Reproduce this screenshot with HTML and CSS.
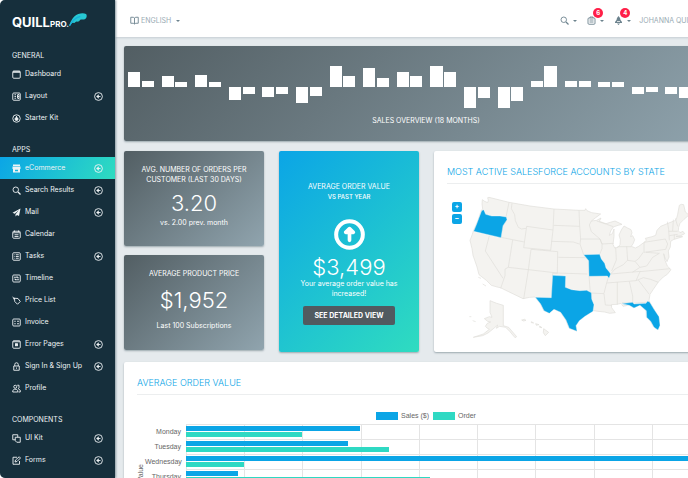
FILE: index.html
```html
<!DOCTYPE html>
<html lang="en">
<head>
<meta charset="utf-8">
<title>QuillPro eCommerce dashboard</title>
<link rel="stylesheet" href="styles.css">
</head>
<body>
<svg class="sprite" aria-hidden="true">
  <symbol id="i-window" viewBox="0 0 18 18"><rect x="1.5" y="2" width="15" height="14.500" rx="2"/><path d="M2 4h14" stroke-width="3"/></symbol>
  <symbol id="i-layout" viewBox="0 0 18 18"><rect x="1.500" y="2" width="15" height="14.500" rx="2"/><path d="M5 5.500h3M5 9h3M5 12.500h3M11 5v8M11 9h3M12 5h2v8h-2"/></symbol>
  <symbol id="i-kit" viewBox="0 0 18 18"><circle cx="9" cy="9" r="7.500"/><circle cx="9" cy="10" r="3" fill="currentColor"/><path d="M9 4v4"/></symbol>
  <symbol id="i-shop" viewBox="0 0 18 18"><path fill="currentColor" stroke="none" d="M2 1h14v3H2zM1 5h16v5H1zM2 10h14v7H2z"/><path d="M6 13h6" stroke="#16b4da" stroke-width="3"/></symbol>
  <symbol id="i-search" viewBox="0 0 18 18"><circle cx="7.500" cy="7.500" r="5.500"/><path d="M12 12l5 5" stroke-width="2.500"/></symbol>
  <symbol id="i-mail" viewBox="0 0 18 18"><path fill="currentColor" stroke="none" d="M17 1L1 9.500l4.500 2L14 4l-7 8.500V17l3-3 4 2z"/></symbol>
  <symbol id="i-calendar" viewBox="0 0 18 18"><rect x="1.500" y="2.500" width="15" height="14" rx="2"/><path d="M2 5.500h14M5 1v3M13 1v3M5 9.500h8M5 13h8"/></symbol>
  <symbol id="i-tasks" viewBox="0 0 18 18"><rect x="1.500" y="1.500" width="15" height="15" rx="2"/><path d="M4.500 5.500h1M7.500 5.500h6M4.500 9h1M7.500 9h6M4.500 12.500h1M7.500 12.500h6"/></symbol>
  <symbol id="i-timeline" viewBox="0 0 18 18"><rect x="1.500" y="2" width="15" height="14" rx="2"/><path d="M4 6.500h8V9M10 5l2 2M14 11.500H6V9M8 10l-2 2"/></symbol>
  <symbol id="i-tag" viewBox="0 0 18 18"><path d="M5 4.500l7 .5 4.500 6-5.500 5.500L5.500 11zM6 6L1 2M2 6l4-2"/></symbol>
  <symbol id="i-invoice" viewBox="0 0 18 18"><rect x="1.500" y="2" width="15" height="14" rx="2"/><path d="M4.500 6.500h3M10 6.500h4M4.500 11.500h3M10 11.500h4"/></symbol>
  <symbol id="i-error" viewBox="0 0 18 18"><rect x="1.500" y="1.500" width="15" height="15" rx="2"/><path d="M2 3.500h14"/><rect x="7" y="7.500" width="4" height="4" fill="currentColor"/></symbol>
  <symbol id="i-lock" viewBox="0 0 18 18"><path d="M5.500 8V5a3.500 3.500 0 0 1 7 0v3M3.500 8h11v8.500h-11zM9 11v2.500"/></symbol>
  <symbol id="i-users" viewBox="0 0 18 18"><circle cx="6.500" cy="5.500" r="3"/><path d="M1.500 16v-3l3-2.500h4l3 2.500v3zM10.500 2.500h3.500v5l-1.500 2 4 3V16H13"/></symbol>
  <symbol id="i-copy" viewBox="0 0 18 18"><path d="M6.500 11.500h-5v-10h10v5"/><path d="M6.500 6.500h10v10h-7l-3-3z"/></symbol>
  <symbol id="i-edit" viewBox="0 0 18 18"><path d="M10 2.500H2v14h13V10"/><path d="M6 12l1-4 7.500-6.500 2.500 2.500L10 11z"/></symbol>
  <symbol id="i-table" viewBox="0 0 18 18"><rect x="1.500" y="1.500" width="15" height="15" rx="2"/><path d="M2 3h14M2 9h14M9 3v13"/></symbol>
  <symbol id="i-more" viewBox="0 0 18 18"><circle cx="9" cy="9" r="7.800"/><path d="M13 9H6"/><path d="M9 5.500L5 9l4 3.500z" fill="currentColor" stroke-width="1"/></symbol>
  <symbol id="i-book" viewBox="0 0 18 18"><path d="M1.500 2.500h5L9 4l2.500-1.500h5v12h-5L9 16l-2.500-1.500h-5zM9 4v12"/></symbol>
  <symbol id="i-clip" viewBox="0 0 18 18"><rect x="2" y="4" width="14" height="12.500" rx="2"/><path d="M6 4V2h6v2M5 8h8M5 12h8"/></symbol>
  <symbol id="i-bell" viewBox="0 0 18 18"><path fill="currentColor" stroke="none" d="M9 0l3 4 1 4 3 4v2H2v-2l3-4 1-4zM6 15h6l-3 3z"/><path d="M6 11h6" stroke="#fff" stroke-width="1.500"/></symbol>
</svg>
<div class="shell">
  <aside class="sidebar">
    <a class="logo" href="#">QUILL<small>PRO.</small><svg viewBox="0 0 54 42" aria-hidden="true"><path d="M0 40C6 22 14 8 28 3c8-3 18-3 23 0 4 4 2 13-4 16-5 2-8-1-13 1-3 3-4 6-10 6-4-1-4 3-8 4l-5-1C6 32 4 37 0 40z" fill="#27c8d3"/><path d="M2 38C8 26 18 14 34 10" fill="none" stroke="#18afdc" stroke-width="4"/></svg></a>
    <nav>
      <h2>GENERAL</h2>
      <a href="#"><svg><use href="#i-window"/></svg>Dashboard</a>
      <a href="#"><svg><use href="#i-layout"/></svg>Layout<svg class="more"><use href="#i-more"/></svg></a>
      <a href="#"><svg><use href="#i-kit"/></svg>Starter Kit</a>
      <h2>APPS</h2>
      <a href="#" class="active"><svg><use href="#i-shop"/></svg>eCommerce<svg class="more"><use href="#i-more"/></svg></a>
      <a href="#"><svg><use href="#i-search"/></svg>Search Results<svg class="more"><use href="#i-more"/></svg></a>
      <a href="#"><svg><use href="#i-mail"/></svg>Mail<svg class="more"><use href="#i-more"/></svg></a>
      <a href="#"><svg><use href="#i-calendar"/></svg>Calendar</a>
      <a href="#"><svg><use href="#i-tasks"/></svg>Tasks<svg class="more"><use href="#i-more"/></svg></a>
      <a href="#"><svg><use href="#i-timeline"/></svg>Timeline</a>
      <a href="#"><svg><use href="#i-tag"/></svg>Price List</a>
      <a href="#"><svg><use href="#i-invoice"/></svg>Invoice</a>
      <a href="#"><svg><use href="#i-error"/></svg>Error Pages<svg class="more"><use href="#i-more"/></svg></a>
      <a href="#"><svg><use href="#i-lock"/></svg>Sign In &amp; Sign Up<svg class="more"><use href="#i-more"/></svg></a>
      <a href="#"><svg><use href="#i-users"/></svg>Profile</a>
      <h2>COMPONENTS</h2>
      <a href="#"><svg><use href="#i-copy"/></svg>UI Kit<svg class="more"><use href="#i-more"/></svg></a>
      <a href="#"><svg><use href="#i-edit"/></svg>Forms<svg class="more"><use href="#i-more"/></svg></a>
      <a href="#"><svg><use href="#i-table"/></svg>Tables</a>
    </nav>
  </aside>
  <div class="main">
    <header class="topbar">
      <button class="lang"><svg><use href="#i-book"/></svg>ENGLISH<i class="caret"></i></button>
      <div class="tools">
        <button aria-label="Search"><svg><use href="#i-search"/></svg><i class="caret"></i></button>
        <button aria-label="Tasks"><svg><use href="#i-clip"/></svg><i class="caret"></i><b class="badge">6</b></button>
        <button aria-label="Alerts"><svg><use href="#i-bell"/></svg><i class="caret"></i><b class="badge">4</b></button>
        <button class="user">JOHANNA QUINN</button>
      </div>
    </header>
    <main class="dashboard">
      <section class="card slate overview">
        <svg viewBox="0 0 604 44" preserveAspectRatio="none" fill="#fff" shape-rendering="crispEdges" aria-hidden="true">
          <path d="M4 22v-15h12v15zM18 22v-6h12v6zM38 22v-11h12v11zM51 22v-5h12v5zM71 22v-12h12v12zM85 22v-5h12v5zM105 22v13h12v-13zM119 22v7h12v-7zM138 22v10h12v-10zM152 22v7h12v-7zM172 22v16h12v-16zM186 22v9h12v-9zM206 22v-21h12v21zM219 22v-11h12v11zM239 22v-19h12v19zM253 22v-9h12v9zM273 22v-15h12v15zM286 22v-11h12v11zM306 22v-21h13v21zM320 22v-15h12v15zM340 22v21h12v-21zM354 22v11h12v-11zM374 22v21h12v-21zM387 22v14h12v-14zM407 22v-6h12v6zM420 22v-21h13v21zM441 22v-6h12v6zM455 22v-6h12v6zM474 22v-5h12v5zM488 22v-5h12v5zM508 22v7h12v-7zM522 22v5h12v-5zM541 22v7h12v-7zM555 22v11h12v-11zM575 22v9h12v-9zM589 22v7h12v-7z"/>
        </svg>
        <h2>SALES OVERVIEW (18 MONTHS)</h2>
      </section>
      <div class="stats">
        <section class="card slate stat">
          <h2>AVG. NUMBER OF ORDERS PER CUSTOMER (LAST 30 DAYS)</h2>
          <strong>3.20</strong>
          <p>vs. 2.00 prev. month</p>
        </section>
        <section class="card slate stat loose">
          <h2>AVERAGE PRODUCT PRICE</h2>
          <strong>$1,952</strong>
          <p>Last 100 Subscriptions</p>
        </section>
      </div>
      <section class="card order">
        <h2>AVERAGE ORDER VALUE</h2>
        <h3>VS PAST YEAR</h3>
        <svg viewBox="0 0 93 93" aria-hidden="true"><circle cx="46.500" cy="46.500" r="40" fill="none" stroke="#fff" stroke-width="12"/><path d="M46.500 64V34M35 40l11.500-11L58 40z" fill="#fff" stroke="#fff" stroke-width="11" stroke-linejoin="round" stroke-linecap="round"/></svg>
        <strong>$3,499</strong>
        <p>Your average order value has increased!</p>
        <button>SEE DETAILED VIEW</button>
      </section>
      <section class="card panel accounts">
        <h2>MOST ACTIVE SALESFORCE ACCOUNTS BY STATE</h2>
        <div class="map">
          <svg viewBox="51 120 804 480" role="img" aria-label="Map of the United States">
            <g fill="#f4f3f0" stroke="#e0deda" stroke-width="2" stroke-linejoin="round">
              <path d="M157 167l7 5 9 4 2-7-2-8 4-1 60 15 63 11 72 9 75 4 18 0 2-5 4 6 14 6 27 4-15 11-13 10 16-2 13-7-5 10 20 7 13-4 14-4 21 10-12 3-14 5-8 12-4 13 9-5 5-14 0 22-3 24 5 11 10-2 6-8 1-15-4-14 7-15 8-12 11 6 10 5 3 9-4 12 6-3 6 12-4 11-6 9 12 5 10-5 15-11 8-7-3-6 20-5 11-4 4-15 11-12 22-9 20-8 5-4 4-15 5-27 6-3 7 1 5 22 11 9-15 13-12 12-4 12-1 10 5 6 9-4 5 7-12 6-14 2 20 1-28 9-8 5-1 17-6 12 2 18-6 14-5-9-5-15 4 20 7 17 11 11-11 14-12 8-15 15-15 22-10 15-3 18 5 10 10 17 13 23 4 25-6 13-12-8-10-18-12-12-1-20-19-16-18 8-14-8-18 4-6-9-12 3-17 1 1 9 11 15-17 2-15-4-20-2-13-2-3 1-24 15-17 13-10 15 3 17-23-9-10-25-16-23-20-9-14 12-16-8-10-20-16-20-16 1-20 4-68-33-6-1-21-6-15-15-22-17-6-23-12-35-3-20-6-25 7-18 3-10 14-32 10-30 4-4-2-15z"/>
              <g fill="none"><path d="M237 175l-9 44M246 178l-2 16 10 18 2 18 9 20 10 5 13-2M231 227l-12 18-6 35 70 14M290 247l79 11M290 247l-9 64 81 8M372 195l-3 63-7 61M178 275l-12 46 53 82M248 288l-13 82-10 5 0 20-13 38M303 316l-8 62-14 87M235 370l147 17 90 3M303 316l80 7-1 65-14 0v7l-4 66M371 244l78 3 3 38-2 15 11 32 15 18 1 46M447 199l2 48M364 292l66 2 18 6M385 340l81 1M452 285h58l6 15 35-2M484 231l-6 12 6 20 26 22M510 285l6 15 0 14-7 17M500 231l30 10 20 7M557 310l2 38-14 33M562 308h42M590 307l3 42M642 295v27l-17 23-10 7-23-3-12 13-25 13-13 15 90-8M642 295l64-10 7 15-6 16-65 9M530 417l88-7 12-27 90-9M607 385l23-15-15-18M630 370l20-4 18-26 20-12-40-3M618 410l22-9 22 5 23 9M477 396h57M477 396l4 51 41 2 4 34 19 1M535 400l-6 20-7 28M562 414v68M598 412l10 44v20h-32M608 478l50-4M625 408l32 42M484 447l1 18M712 233l4 24 2 32M730 227l-2 34M736 223l7 24M716 262h27M718 275l25-4M733 272v13"/></g>
              <path d="M180 470l20 8 20 6v61l16 5 12 14 12 14-5 3-16-19-12-12-18-3-10 6 4-10-14 12-15 12-16 8-28 5 30-10 18-14-7-4-5-5 6-9 10-4-9-2-10-8 15-6 8 2-6-15z"/>
              <path d="M275 528l9-2 4 3-8 2zM304 533l7 4-7-1zM317 539l10 3-8 2zM329 546l7 5-7-1zM341 554l15 11-10 10-6-9zM145 400l8 3M158 420l10 6M118 518h6M128 530l9 3"/>
            </g>
            <g fill="#0ba5e6" stroke="#fff" stroke-width="1">
              <path d="M155 200l6-3 6 14 18 5 25 0 19 3 2 8-12 18-6 36-82-19 9-22z"/>
              <path d="M461 332l48-1 5 14 10 13 4 14 10 12 4 6-5 13-5-7-55 1-1-47z"/>
              <path d="M368 394l39 2-1 34 19 7 25 3 20-1 14 7 1 19 7 17-3 20-24 15-17 13-10 15 3 17-23-9-10-25-16-23-20-9-14 12-16-8-10-20-16-20 48 1z"/>
              <path d="M574 479l34-4 4 5 36-2 4-6 6 1 4 6 10 17 15 22 3 26-6 14-12-8-10-18-12-12-1-20-19-16-18 8-14-8z"/>
            </g>
          </svg>
          <div class="zoom"><button aria-label="Zoom in">+</button><button aria-label="Zoom out">−</button></div>
        </div>
      </section>
      <section class="card panel trend">
        <h2>AVERAGE ORDER VALUE</h2>
        <div class="legend"><span><i class="sales"></i>Sales ($)</span><span><i class="orders"></i>Order</span></div>
        <div class="chart">
          <span class="axis">Value</span>
          <div class="rows">
            <div class="row"><span>Monday</span><div><i class="sales" style="width:33.300%"></i><i class="orders" style="width:22.200%"></i></div></div>
            <div class="row"><span>Tuesday</span><div><i class="sales" style="width:31%"></i><i class="orders" style="width:38.800%"></i></div></div>
            <div class="row"><span>Wednesday</span><div><i class="sales" style="width:98%"></i><i class="orders" style="width:11.100%"></i></div></div>
            <div class="row"><span>Thursday</span><div><i class="sales" style="width:10%"></i><i class="orders" style="width:46.600%"></i></div></div>
          </div>
        </div>
      </section>
    </main>
  </div>
</div>
</body>
</html>
```
FILE: styles.css
```css
* { box-sizing: border-box; }
body { margin: 0; overflow: hidden; background: #fff; font: 7px/10px Inter, "Open Sans", sans-serif; color: #fff; }
h2, h3, p { margin: 0; font-size: inherit; font-weight: 400; }
button { border: 0; padding: 0; background: none; color: inherit; font: inherit; }
a { color: inherit; text-decoration: none; }
i { font-style: normal; }
.sprite { display: none; }
nav svg, .topbar svg { fill: none; stroke: currentColor; stroke-width: 1.8; }

.shell { display: flex; height: 100vh; overflow: hidden; border-radius: 5px 0 0 5px; background: #e5eaed; }
.sidebar { flex: 0 0 115px; background: #162f3c; box-shadow: 1px 0 2px #8a9aa2; z-index: 1; color: #eef3f5; }
.logo { display: flex; align-items: baseline; height: 35px; padding: 13px 0 0 12px; font-size: 13px; line-height: 18px; font-weight: 700; color: #fff; }
.logo small { font-size: 8px; }
.logo svg { width: 18px; height: 14px; align-self: flex-start; }
nav h2 { padding: 16px 12px 2px; font-size: 7px; }
nav a { display: flex; align-items: center; gap: 4px; height: 22px; padding: 0 12px; }
nav svg { width: 9px; height: 9px; flex: none; }
nav .more { margin-left: auto; }
nav .active { background: linear-gradient(120deg, #0ba5e6, #2fdcc0); }

.main { flex: 1 0 629px; }
.topbar { display: flex; align-items: center; height: 37px; padding: 4px 45px 0 15px; background: #fff; box-shadow: 0 1px 2px #c5ced3; color: #6d838e; }
.topbar button { position: relative; display: flex; align-items: center; gap: 4px; }
.topbar svg { width: 9px; height: 9px; }
.topbar .lang { gap: 2px; color: #9aabb4; }
.lang svg { color: #6d838e; }
.lang .caret { margin-left: 3px; }
.caret { border: 2px solid transparent; border-top-color: #6d838e; border-bottom: 0; }
.tools { display: flex; gap: 10px; margin-left: auto; }
.tools .user { margin-left: -2px; color: #9aabb4; }
.badge { position: absolute; left: 6px; top: -8px; width: 10px; height: 10px; border-radius: 50%; background: #ff1f48; color: #fff; font-size: 6px; text-align: center; }

.dashboard { display: grid; grid-template-columns: 140fr 140fr 294fr; gap: 10px 15px; padding: 9px 16px 9px 9px; }
.card { border-radius: 2px; box-shadow: 0 1px 2px #9ba8ae; }
.slate { background: linear-gradient(135deg, #525e63, #90a4ae); text-align: center; }
.overview { grid-column: 1 / -1; height: 95px; padding-top: 19px; }
.overview svg { display: block; width: 100%; height: 44px; }
.overview h2 { margin-top: 7px; }

.stats { display: grid; gap: 9px; align-content: start; }
.stat { display: flex; flex-direction: column; padding: 14px 16px; height: 95px; }
strong { font-size: 22px; line-height: 28px; font-weight: 300; }
.stat strong { margin: 4px 0 0; }
.stat p { line-height: 12px; }
.loose strong { margin: 7px 0 6px; }

.order { display: flex; flex-direction: column; align-items: center; padding: 31px 20px 0; background: linear-gradient(135deg, #0ba5e6, #2fdcc0); text-align: center; }
.order h3 { font-size: 6px; font-weight: 500; }
.order svg { width: 31px; height: 31px; margin: 17px 0 3px; }
.order p { margin-top: -2px; }
.order button { width: 92px; height: 19px; margin-top: 7px; border-radius: 2px; background: #515a60; font-weight: 700; }

.panel { padding: 0 13px; background: #fff; color: #666; }
.panel h2 { padding: 15px 0 5px; border-bottom: 1px solid #eceeef; font-size: 9px; line-height: 12px; font-weight: 300; color: #0ba5e6; }
.accounts { padding-bottom: 8px; }
.map { position: relative; }
.map > svg { display: block; width: 100%; }
.zoom { position: absolute; left: 5px; top: 18px; display: grid; gap: 2px; }
.zoom button { width: 10px; height: 10px; border-radius: 2px; background: #0ba5e6; color: #fff; font-weight: 700; line-height: 8px; }

.trend { grid-column: 1 / -1; font: 7px/10px "Liberation Sans", sans-serif; }
.trend h2 { font-family: Inter, sans-serif; }
.legend { display: flex; justify-content: center; gap: 4px; padding: 16px 0 3px; }
.legend span { display: flex; align-items: center; gap: 3px; }
.legend i { width: 22px; height: 8px; }
.sales { background: #0ba5e6; }
.orders { background: #2fd9c3; }
.chart { display: flex; }
.axis { width: 8px; margin-top: 40px; line-height: 8px; writing-mode: vertical-rl; transform: rotate(180deg); align-self: flex-start; }
.rows { flex: 1; padding-right: 5px; }
.row { display: flex; height: 15px; }
.row > span { width: 41px; padding: 3px 5px 0 0; text-align: right; }
.row > div { flex: 1; padding-top: 1px; border-top: 1px solid #e4e4e4; background: repeating-linear-gradient(90deg, #e4e4e4 0 1px, transparent 1px calc(100% / 9)); }
.row i { display: block; height: 5px; margin-bottom: 1px; }
```
